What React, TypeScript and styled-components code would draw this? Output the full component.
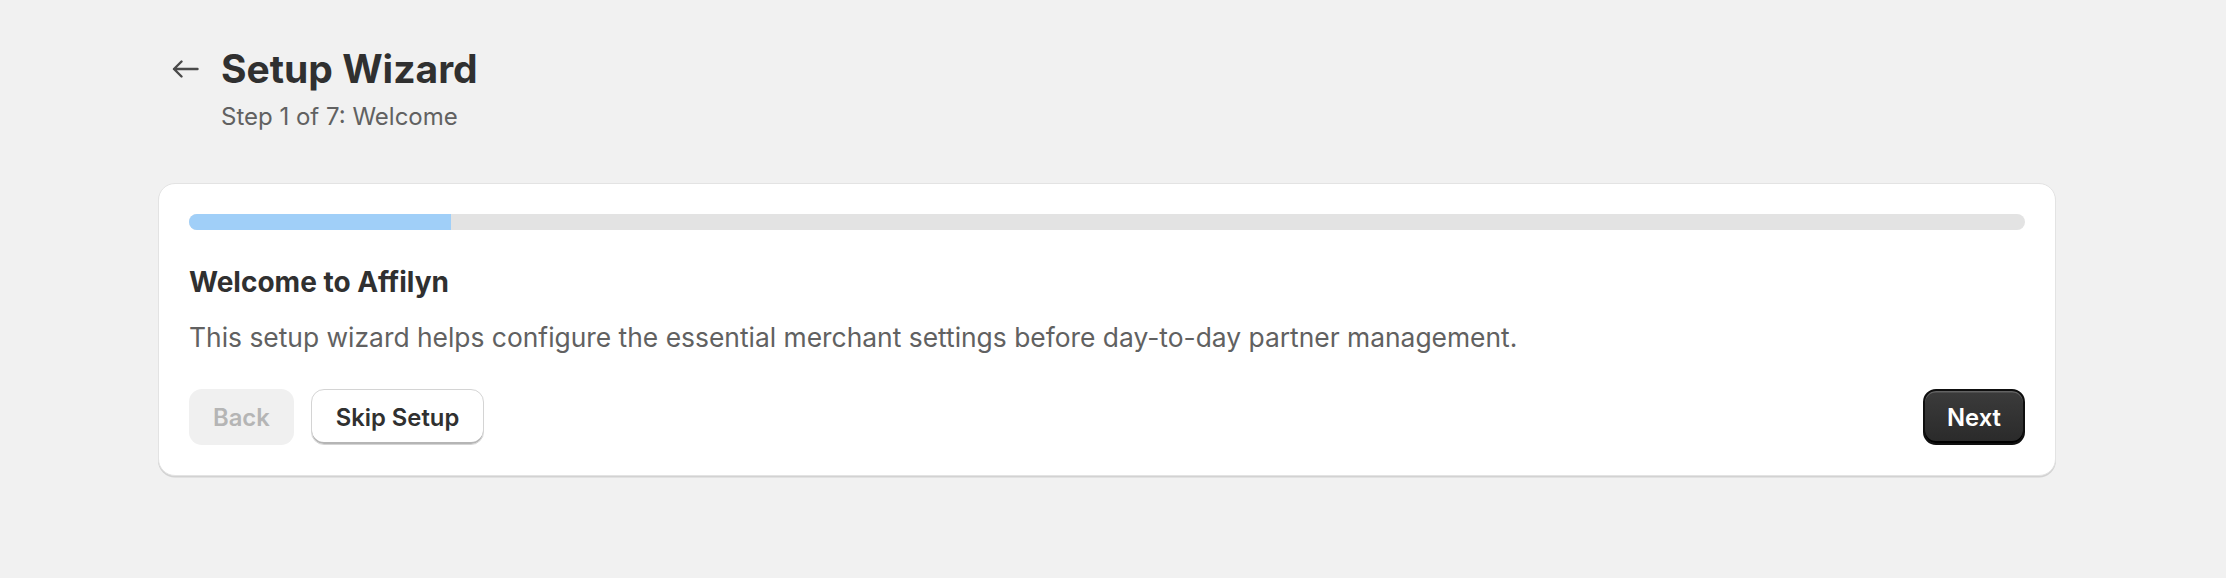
import { ReactElement } from "react";
import styled, { createGlobalStyle } from "styled-components";

const GlobalStyle = createGlobalStyle`
  html, body {
    margin: 0;
    padding: 0;
    background-color: #f1f1f1;
    font-family: "Inter", "Noto Sans", sans-serif;
    color: #303030;
  }
`;

const Page = styled.div`
  padding: 46px 170px 100px 158px;
  min-height: 578px;
  box-sizing: border-box;
`;

const Header = styled.header`
  display: flex;
  align-items: flex-start;
  gap: 22px;
  padding-left: 14px;
  margin-bottom: 51px;
`;

const BackLink = styled.button`
  display: flex;
  align-items: center;
  justify-content: center;
  background: none;
  border: none;
  padding: 0;
  margin-top: 14px;
  width: 27px;
  height: 18px;
  color: #4a4a4a;
  cursor: pointer;
`;

const Titles = styled.div`
  display: flex;
  flex-direction: column;
  gap: 10px;
`;

const Title = styled.h1`
  margin: 0;
  font-size: 39px;
  line-height: 46px;
  font-weight: 700;
  color: #303030;
`;

const Subtitle = styled.p`
  margin: 0;
  font-size: 24px;
  line-height: 30px;
  color: #616161;
`;

const Card = styled.section`
  background: #ffffff;
  border: 1px solid #e3e3e3;
  border-radius: 17px;
  box-shadow: 0 1.5px 0 #d2d2d2;
  padding: 30px;
`;

const Track = styled.div`
  height: 16px;
  border-radius: 8px;
  background: #e3e3e3;
  overflow: hidden;
  display: flex;
`;

const Fill = styled.div`
  height: 100%;
  background: #a0cff8;
`;

const Heading = styled.h2`
  margin: 34px 0 0;
  font-size: 28px;
  line-height: 36px;
  font-weight: 700;
  color: #303030;
`;

const Body = styled.p`
  margin: 20px 0 0;
  font-size: 26.4px;
  line-height: 34px;
  color: #616161;
`;

const Actions = styled.div`
  display: flex;
  align-items: center;
  gap: 17px;
  margin-top: 35px;
`;

const Spacer = styled.div`
  flex: 1;
`;

const Button = styled.button<{ $variant: "disabled" | "secondary" | "primary" }>`
  height: 56px;
  padding: 0 24px;
  border-radius: 13px;
  font-family: "Inter", "Noto Sans", sans-serif;
  font-size: 23.8px;
  font-weight: 600;
  cursor: pointer;
  box-sizing: border-box;
  ${({ $variant }) =>
    $variant === "disabled"
      ? `
    background: #f0f0f0;
    color: #b5b5b5;
    border: none;
    cursor: default;
  `
      : $variant === "secondary"
      ? `
    background: #ffffff;
    color: #303030;
    border: 1px solid #d4d4d4;
    box-shadow: inset 0 -2px 0 #b5b5b5;
  `
      : `
    background: linear-gradient(#3b3b3b, #2a2a2a);
    color: #ffffff;
    border: 2px solid #0f0f0f;
    padding: 0 22px;
    box-shadow: inset 0 -2px 0 #000000, inset 0 1.5px 0 rgba(255, 255, 255, 0.2);
  `}
`;

const totalSteps = 7;
const currentStep = 1;

export default function App(): ReactElement {
  return (
    <>
      <GlobalStyle />
      <Page>
        <Header>
          <BackLink aria-label="Back">
            <svg width="27" height="18" viewBox="0 0 27 18" fill="none">
              <path
                d="M25.5 9H2M9.5 1.5L2 9l7.5 7.5"
                stroke="currentColor"
                strokeWidth="2.4"
                strokeLinecap="round"
                strokeLinejoin="round"
              />
            </svg>
          </BackLink>
          <Titles>
            <Title>Setup Wizard</Title>
            <Subtitle>Step 1 of 7: Welcome</Subtitle>
          </Titles>
        </Header>
        <Card>
          <Track>
            <Fill style={{ width: `${(currentStep / totalSteps) * 100}%` }} />
          </Track>
          <Heading>Welcome to Affilyn</Heading>
          <Body>
            This setup wizard helps configure the essential merchant settings before
            day-to-day partner management.
          </Body>
          <Actions>
            <Button $variant="disabled" disabled>
              Back
            </Button>
            <Button $variant="secondary">Skip Setup</Button>
            <Spacer />
            <Button $variant="primary">Next</Button>
          </Actions>
        </Card>
      </Page>
    </>
  );
}
